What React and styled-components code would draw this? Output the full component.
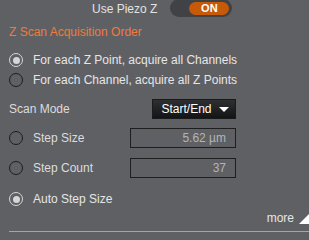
import React, { useState } from "react";
import styled, { createGlobalStyle } from "styled-components";

const GlobalStyle = createGlobalStyle`
  html, body {
    margin: 0;
    padding: 0;
    background: #5f6064;
  }
  body {
    font-family: "Liberation Sans", Arial, sans-serif;
  }
`;

const Panel = styled.div`
  width: 309px;
  height: 240px;
  box-sizing: border-box;
  background: #5f6064;
  color: #e6e6e6;
  font-size: 12px;
  padding: 0 0 0 9px;
  overflow: hidden;
  display: flex;
  flex-direction: column;
`;

const PiezoRow = styled.div`
  display: flex;
  align-items: center;
  height: 17px;
  padding-left: 83px;
  gap: 13px;
`;

const PiezoLabel = styled.span`
  color: #e2e2e2;
`;

const Toggle = styled.button`
  width: 62px;
  height: 18px;
  margin-top: -1px;
  border: none;
  border-radius: 9px;
  background: #404246;
  padding: 0 3px 0 0;
  display: flex;
  align-items: center;
  justify-content: flex-end;
  cursor: pointer;
`;

const ToggleKnob = styled.span`
  width: 40px;
  height: 13px;
  border-radius: 7px;
  background: #c65a08;
  color: #fff;
  font-family: "Liberation Sans", Arial, sans-serif;
  font-size: 11px;
  font-weight: bold;
  line-height: 13px;
  text-align: center;
`;

const SectionTitle = styled.div`
  color: #f07a3c;
  margin-top: 8px;
  height: 14px;
  line-height: 14px;
`;

const RadioGroup = styled.div`
  display: flex;
  flex-direction: column;
  margin-top: 14px;
  gap: 6px;
`;

const RadioRow = styled.label`
  display: flex;
  align-items: center;
  gap: 10px;
  height: ${(p) => p.$h || 14}px;
  cursor: pointer;
`;

const RadioDot = styled.span`
  width: 14px;
  height: 14px;
  box-sizing: border-box;
  border-radius: 50%;
  border: 1.5px solid ${(p) => (p.$on ? "#d6d6d6" : "#1c1c1c")};
  display: flex;
  align-items: center;
  justify-content: center;
  flex-shrink: 0;

  &::after {
    content: "";
    width: 7px;
    height: 7px;
    border-radius: 50%;
    background: ${(p) => (p.$on ? "#d6d6d6" : "transparent")};
  }
`;

const ModeRow = styled.div`
  display: flex;
  align-items: center;
  justify-content: space-between;
  margin-top: 12px;
  padding-right: 73px;
  height: 20px;
`;

const Dim = styled.span`
  color: #dcdcdc;
`;

const Dropdown = styled.button`
  width: 84px;
  height: 20px;
  box-sizing: border-box;
  border: 1px solid #1a1a1a;
  background: linear-gradient(#2e2f31, #131416);
  color: #fff;
  font-family: "Liberation Sans", Arial, sans-serif;
  font-size: 12px;
  display: flex;
  align-items: center;
  justify-content: center;
  gap: 7px;
  padding: 0 0 0 2px;
  cursor: pointer;
`;

const Caret = styled.span`
  width: 0;
  height: 0;
  border-left: 5px solid transparent;
  border-right: 5px solid transparent;
  border-top: 5px solid #fff;
`;

const StepList = styled.div`
  display: flex;
  flex-direction: column;
  margin-top: 9px;
  gap: 10px;
`;

const StepRow = styled.div`
  display: flex;
  align-items: center;
  height: 20px;
  margin-top: ${(p) => p.$shift || 0}px;
`;

const StepLabel = styled(RadioRow)`
  width: 121px;
`;

const ValueBox = styled.input`
  width: 106px;
  height: 20px;
  box-sizing: border-box;
  border: 1px solid #1e1e1e;
  background: transparent;
  color: #b4b4b4;
  font-family: "Liberation Sans", Arial, sans-serif;
  font-size: 12px;
  text-align: right;
  padding: 0 9px 0 0;
  outline: none;
`;

const MoreRow = styled.div`
  display: flex;
  justify-content: flex-end;
  align-items: flex-end;
  gap: 5px;
  margin-top: 4px;
  height: 11px;
`;

const MoreText = styled.span`
  color: #e6e6e6;
  line-height: 11px;
`;

const Corner = styled.span`
  width: 0;
  height: 0;
  border-left: 10px solid transparent;
  border-bottom: 10px solid #fff;
`;

const Divider = styled.div`
  margin-top: 7px;
  height: 1px;
  background: #a4a4a6;
`;

export default function App() {
  const [order, setOrder] = useState(0);
  const [step, setStep] = useState(2);

  return (
    <>
      <GlobalStyle />
      <Panel>
        <PiezoRow>
          <PiezoLabel>Use Piezo Z</PiezoLabel>
          <Toggle>
            <ToggleKnob>ON</ToggleKnob>
          </Toggle>
        </PiezoRow>
        <SectionTitle>Z Scan Acquisition Order</SectionTitle>
        <RadioGroup>
          <RadioRow onClick={() => setOrder(0)}>
            <RadioDot $on={order === 0} />
            For each Z Point, acquire all Channels
          </RadioRow>
          <RadioRow onClick={() => setOrder(1)}>
            <RadioDot $on={order === 1} />
            For each Channel, acquire all Z Points
          </RadioRow>
        </RadioGroup>
        <ModeRow>
          <Dim>Scan Mode</Dim>
          <Dropdown>
            Start/End <Caret />
          </Dropdown>
        </ModeRow>
        <StepList>
          <StepRow>
            <StepLabel $h={20} onClick={() => setStep(0)}>
              <RadioDot $on={step === 0} />
              <Dim>Step Size</Dim>
            </StepLabel>
            <ValueBox readOnly value="5.62 µm" />
          </StepRow>
          <StepRow>
            <StepLabel $h={20} onClick={() => setStep(1)}>
              <RadioDot $on={step === 1} />
              <Dim>Step Count</Dim>
            </StepLabel>
            <ValueBox readOnly value="37" />
          </StepRow>
          <StepRow $shift={1}>
            <StepLabel $h={20} onClick={() => setStep(2)}>
              <RadioDot $on={step === 2} />
              Auto Step Size
            </StepLabel>
          </StepRow>
        </StepList>
        <MoreRow>
          <MoreText>more</MoreText>
          <Corner />
        </MoreRow>
        <Divider />
      </Panel>
    </>
  );
}
